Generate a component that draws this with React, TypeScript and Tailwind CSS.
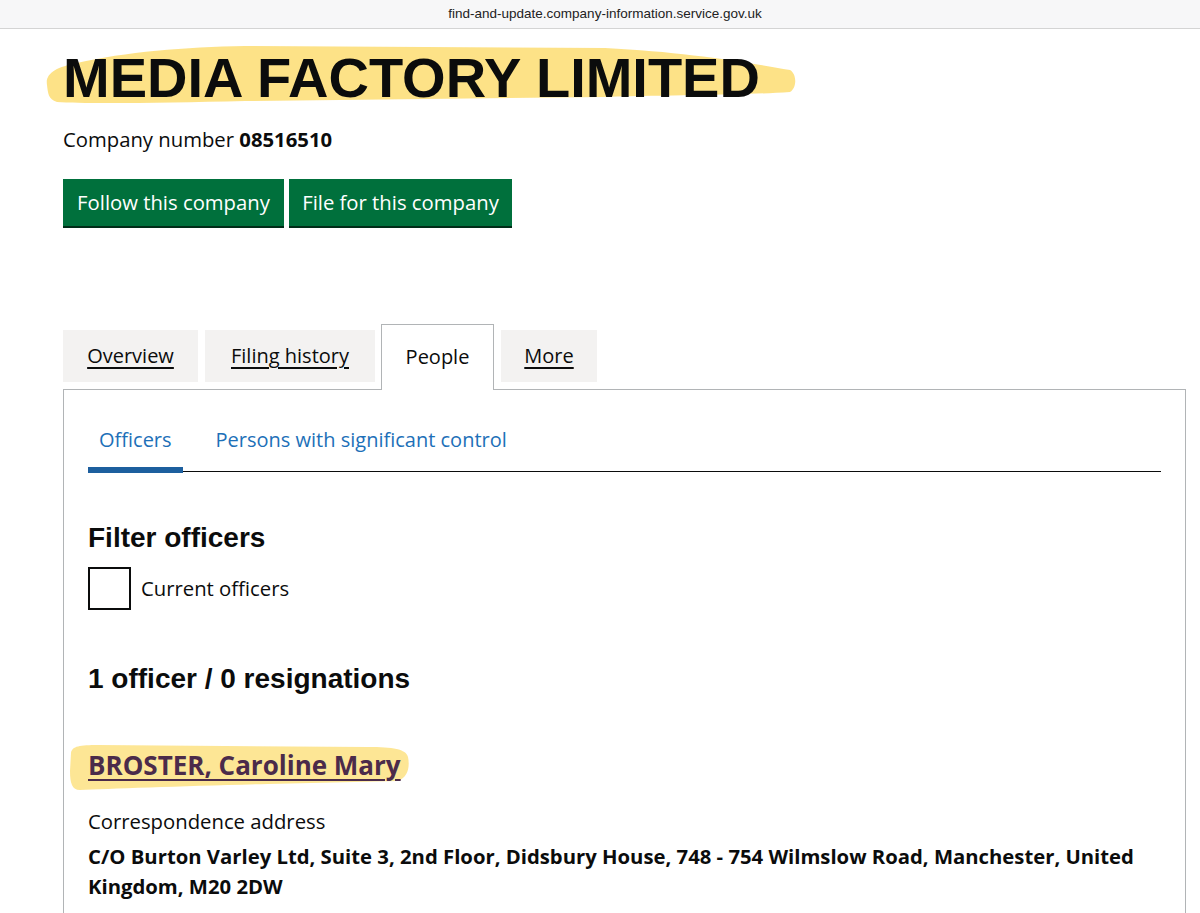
import React from "react";

const body = { fontFamily: "'Open Sans', 'Noto Sans', Arial, sans-serif" };
const heading = { fontFamily: "'Liberation Sans', Arial, sans-serif" };

function TitleMark() {
  return (
    <svg
      className="absolute left-[-18px] top-[-7px] w-[752px] h-[62px] pointer-events-none"
      viewBox="0 0 752 62"
      preserveAspectRatio="none"
    >
      <path
        d="M2,42 C0,30 12,24 32,20 C80,9 140,4 200,3 L560,5 C640,9 700,19 745,27 C752,31 752,45 745,49 C700,52 640,52 560,54 L200,58 C120,60 40,61 12,59 C3,56 3,50 2,42 Z"
        fill="#fddf7a"
        opacity="0.9"
      />
    </svg>
  );
}

function NameMark() {
  return (
    <svg
      className="absolute left-[-20px] top-[-7px] w-[344px] h-[48px] pointer-events-none"
      viewBox="0 0 344 48"
      preserveAspectRatio="none"
    >
      <path
        d="M3,10 C4,3 12,2 30,2 L300,4 C325,4 338,6 340,14 C342,24 340,34 330,38 L200,41 C120,43 40,46 12,47 C4,47 2,40 2,28 Z"
        fill="#fde38a"
        opacity="0.9"
      />
    </svg>
  );
}

export default function App() {
  return (
    <div className="w-[1200px] h-[913px] overflow-hidden bg-white text-[#0b0c0c]">
      {/* browser address bar */}
      <div className="h-[29px] bg-[#f7f7f8] border-b border-[#d4d4d4] flex items-center justify-center">
        <span className="text-[13.5px] text-[#222] ml-[10px]" style={heading}>
          find-and-update.company-information.service.gov.uk
        </span>
      </div>

      <div className="pl-[63px] pr-[15px]">
        <div className="relative mt-[21px] inline-block">
          <TitleMark />
          <h1 className="relative text-[56px] leading-none font-bold" style={heading}>
            MEDIA FACTORY LIMITED
          </h1>
        </div>

        <p className="mt-[21px] text-[20.3px] leading-[25px]" style={body}>
          Company number <strong className="font-bold">08516510</strong>
        </p>

        <div className="mt-[27px] flex gap-[5px]" style={body}>
          <button className="h-[47px] w-[221px] bg-[#00703c] text-white text-[20.3px] shadow-[0_2px_0_#002d18]">
            Follow this company
          </button>
          <button className="h-[47px] w-[223px] bg-[#00703c] text-white text-[20.3px] shadow-[0_2px_0_#002d18]">
            File for this company
          </button>
        </div>

        {/* main tabs */}
        <div className="mt-[98px] flex items-end gap-[7px] text-[20px]" style={body}>
          <a className="h-[52px] w-[135px] mb-[7px] bg-[#f3f2f1] flex items-center justify-center underline underline-offset-[4px]">
            Overview
          </a>
          <a className="h-[52px] w-[170px] mb-[7px] bg-[#f3f2f1] flex items-center justify-center underline underline-offset-[4px]">
            Filing history
          </a>
          <div className="relative z-10 -mb-[1px] h-[66px] w-[113px] bg-white border border-b-0 border-[#b1b4b6] flex items-center justify-center pb-[1px] -ml-[1px]">
            People
          </div>
          <a className="h-[52px] w-[96px] mb-[7px] bg-[#f3f2f1] flex items-center justify-center underline underline-offset-[4px]">
            More
          </a>
        </div>

        {/* panel */}
        <div className="w-[1123px] h-[600px] border border-b-0 border-[#b1b4b6] px-[24px] pt-[37px]" style={body}>
          <div className="flex border-b border-[#0b0c0c] text-[20px] text-[#1d70b8]">
            <a className="px-[11px] leading-[25px] pb-[15px] border-b-[6px] border-[#1d5f9e] -mb-[2px]">Officers</a>
            <a className="ml-[24px] px-[9px] leading-[25px] pb-[15px]">Persons with significant control</a>
          </div>

          <h2 className="mt-[48px] text-[28px] leading-[35px] font-bold" style={heading}>
            Filter officers
          </h2>
          <label className="mt-[12px] flex items-center gap-[10px] text-[20.3px]">
            <span className="w-[43px] h-[43px] border-2 border-[#0b0c0c] bg-white" />
            Current officers
          </label>

          <h2 className="mt-[51px] text-[28px] leading-[35px] font-bold" style={heading}>
            1 officer / 0 resignations
          </h2>

          <div className="mt-[54px] relative inline-block">
            <NameMark />
            <a className="relative text-[26px] leading-[30px] font-bold text-[#4b2b4a] underline underline-offset-[4px] decoration-[2px]">
              BROSTER, Caroline Mary
            </a>
          </div>

          <p className="mt-[25px] text-[20.3px] leading-[30px]">Correspondence address</p>
          <p className="mt-[5px] text-[20.3px] leading-[30px] font-bold">
            C/O Burton Varley Ltd, Suite 3, 2nd Floor, Didsbury House, 748 - 754 Wilmslow Road, Manchester, United
            Kingdom, M20 2DW
          </p>
        </div>
      </div>
    </div>
  );
}
